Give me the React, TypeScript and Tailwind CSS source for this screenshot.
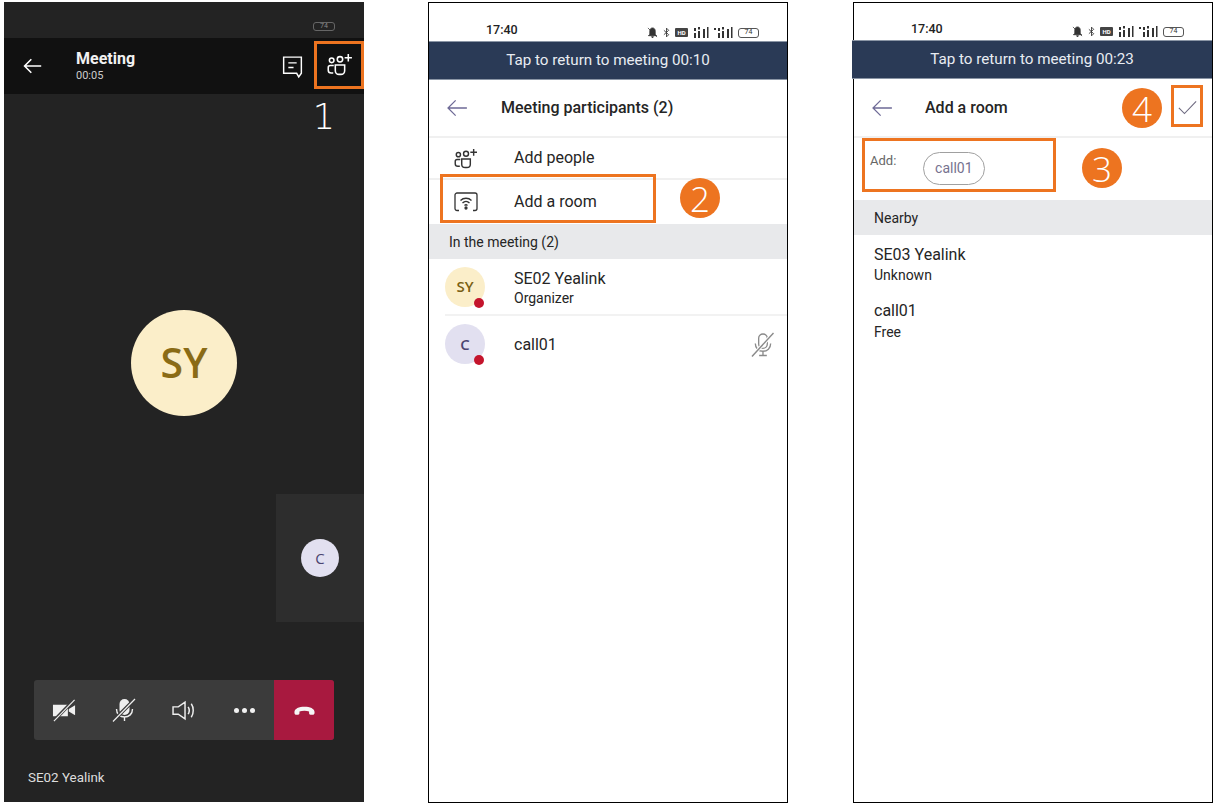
import React from "react";

const AddPeopleIcon = ({ className }: { className?: string }) => (
  <svg viewBox="0 0 26 22" fill="none" stroke="currentColor" strokeWidth="1.5" className={className}>
    <circle cx="4.500" cy="7" r="2.200" />
    <circle cx="12.500" cy="6" r="2.600" />
    <path d="M6.500 12H3.200C2 12 1.200 12.800 1.200 14v2.500c0 1.600 1.200 2.700 2.800 2.700H6" />
    <path d="M8 11.500h9v5.500c0 2-1.600 3.500-3.600 3.500h-1.800C9.600 20.500 8 19 8 17z" />
    <path d="M20.500 1v7M17 4.500h7" />
  </svg>
);

const BackArrow = ({ className, weight = 1.4 }: { className?: string; weight?: number }) => (
  <svg viewBox="0 0 24 20" fill="none" stroke="currentColor" strokeWidth={weight} className={className}>
    <path d="M23 10H2M10.500 1.500 2 10l8.500 8.500" />
  </svg>
);

const MicOff = ({ className }: { className?: string }) => (
  <svg viewBox="0 0 24 26" fill="none" stroke="currentColor" strokeWidth="1.4" className={className}>
    <rect x="8" y="2" width="9" height="15" rx="4.500" />
    <path d="M4.500 12c0 5 3.500 8 8 8s8-3 8-8M12.500 20v4M8.500 24.500h8" />
    <path d="M23.500 1 1 25.500" stroke="#ffffff" strokeWidth="3.500" />
    <path d="M23.500 1 1 25.500" strokeWidth="1.500" />
  </svg>
);

const StatusBar = ({ time, className }: { time: string; className: string }) => (
  <div className={`flex items-end pb-[3px] pl-[57px] pr-[28px] ${className}`}>
    <span className="text-[12.500px] leading-4 text-[#222]" style={{ fontWeight: 500 }}>{time}</span>
    <div className="ml-auto flex items-center gap-[5px] text-[#333]">
      <svg viewBox="0 0 12 12" className="h-[11px] w-[11px]" fill="currentColor">
        <path d="M6 1c2 0 3 1.500 3 3.500V8l1.500 1.500h-9L3 8V4.500C3 2.500 4 1 6 1zM5 10.500h2L6 12zM1 1l10 10" stroke="currentColor" strokeWidth="0.8" />
      </svg>
      <svg viewBox="0 0 8 12" className="h-[11px] w-[7px]" fill="none" stroke="currentColor">
        <path d="M1 3.500 6.500 8.500 4 11V1l2.500 2.500L1 8.500" />
      </svg>
      <span className="flex h-[9px] w-[13px] items-center justify-center rounded-[1px] bg-[#444] text-[6px] font-bold leading-none text-white">HD</span>
      <svg viewBox="0 0 16 11" className="h-[11px] w-[16px]" fill="currentColor">
        <path d="M1 6h2v5H1zM5 4h2v7H5zM10 2h2v9h-2zM14 0h1.500v11H14zM1 1h2v3H1zM5 0h2v2.500H5z" />
      </svg>
      <svg viewBox="0 0 19 11" className="h-[11px] w-[19px]" fill="currentColor">
        <path d="M0 1h2v2H0zM4 6h2v5H4zM8 4h2v7H8zM13 2h2v9h-2zM17 0h1.500v11H17zM4 1h2v3H4zM8 0h2v2.500H8z" />
      </svg>
      <span className="flex h-[10px] w-[21px] items-center justify-center rounded-[3px] border border-[#555] text-[7px] leading-none text-[#333]">74</span>
    </div>
  </div>
);

const ReturnBar = ({ text, className }: { text: string; className?: string }) => (
  <div className={`flex h-[39px] items-center justify-center border-y border-[#8a95a5] bg-[#2a3a56] text-[15.200px] text-[#e8ecf2] ${className ?? ""}`}>
    {text}
  </div>
);

const Callout = ({ n, className }: { n: string; className: string }) => (
  <div
    className={`absolute flex h-10 w-10 items-center justify-center rounded-full bg-[#ed7420] text-[35px] font-light leading-none text-white ${className}`}
    style={{ fontFamily: "'Open Sans', sans-serif" }}
  >
    {n}
  </div>
);

const Highlight = ({ className }: { className: string }) => (
  <div className={`absolute border-[3px] border-[#ed7420] ${className}`} />
);

function CallScreen() {
  return (
    <div className="relative flex h-[800px] w-[360px] flex-col bg-[#232323] text-white">
      <div className="flex h-[36px] items-center justify-end pr-[29px] pt-[12px]">
        <span className="flex h-[9px] w-[22px] items-center justify-center rounded-[3px] border border-[#666] text-[7px] leading-none text-[#888]">74</span>
      </div>
      <div className="flex h-[56px] items-center bg-[#111111] pl-[19px] pr-[10px]">
        <BackArrow className="h-[16px] w-[19px] text-white" weight={2} />
        <div className="ml-[34px]">
          <div className="text-[16px] font-bold leading-[20px] text-[#f2f2f2]">Meeting</div>
          <div className="text-[11px] leading-[14px] text-[#ccc]">00:05</div>
        </div>
        <svg viewBox="0 0 24 24" fill="none" stroke="currentColor" strokeWidth="1.4" className="ml-auto mr-[22px] h-[25px] w-[25px]">
          <path d="M3.500 3h17v15.500L18 22l-2-3.500H3.500zM8 8.500h8M8 13h5" />
        </svg>
        <AddPeopleIcon className="mb-[3px] h-[23px] w-[27px] text-white" />
      </div>
      <Highlight className="right-0 top-[39px] h-[48px] w-[50px]" />
      <div className="absolute right-[29px] top-[95px] text-[35px] font-light leading-10" style={{ fontFamily: "'DejaVu Sans', sans-serif" }}>1</div>

      <div className="relative flex flex-1 flex-col items-center">
        <div className="mt-[216px] flex h-[106px] w-[106px] items-center justify-center rounded-full bg-[#fbeec9] text-[41px] font-semibold text-[#8a6b16]" style={{ fontFamily: "'Open Sans', sans-serif" }}>
          SY
        </div>
        <div className="absolute right-0 top-[400px] flex h-[128px] w-[88px] items-center justify-center bg-[#2d2d2d]">
          <div className="flex h-[38px] w-[38px] items-center justify-center rounded-full bg-[#e2e0f0] text-[15px] text-[#4a4570]" style={{ fontFamily: "'Open Sans', sans-serif" }}>
            C
          </div>
        </div>
        <div className="mt-auto mb-[62px] flex h-[60px] w-[300px] overflow-hidden rounded-[3px] bg-[#3b3b3b]">
          <div className="flex w-[60px] items-center justify-center">
            <svg viewBox="0 0 26 24" className="h-[24px] w-[25px]" fill="#efefef" stroke="none">
              <path d="M1 6.500h15.500v12H1zM17.500 11 24 7v10.500l-6.500-4z" />
              <path d="M23 1.500 2 23" stroke="#3b3b3b" strokeWidth="3.500" />
              <path d="M23.500 1.500 2 23.500" stroke="#efefef" strokeWidth="1.200" />
            </svg>
          </div>
          <div className="flex w-[60px] items-center justify-center">
            <svg viewBox="0 0 24 26" className="h-[26px] w-[24px]">
              <rect x="7.500" y="2" width="10" height="16" rx="5" fill="#efefef" />
              <path d="M4.500 12c0 5 3.500 8 8 8s8-3 8-8M12.500 20v4" fill="none" stroke="#efefef" strokeWidth="1.400" />
              <path d="M23 2 1 24" stroke="#3b3b3b" strokeWidth="3.500" />
              <path d="M23 2 1 24.500" stroke="#efefef" strokeWidth="1.200" />
            </svg>
          </div>
          <div className="flex w-[60px] items-center justify-center pl-[1px]">
            <svg viewBox="0 0 24 20" fill="none" stroke="#efefef" strokeWidth="1.400" className="h-[21px] w-[25px]">
              <path d="M1 6.500h5L12.500 2v16L6 13.500H1zM15.500 6.500c1.200 2 1.200 5 0 7M18.500 3.500c2.500 3.500 2.500 9.500 0 13" />
            </svg>
          </div>
          <div className="flex w-[60px] items-center justify-center gap-[3px]">
            <span className="h-[5px] w-[5px] rounded-full bg-[#f2f2f2]" />
            <span className="h-[5px] w-[5px] rounded-full bg-[#f2f2f2]" />
            <span className="h-[5px] w-[5px] rounded-full bg-[#f2f2f2]" />
          </div>
          <div className="flex w-[60px] items-center justify-center bg-[#a8193f]">
            <svg viewBox="0 0 24 12" fill="#f5f5f5" className="h-[11px] w-[23px]">
              <path d="M1 8c0-4 5-6 11-6s11 2 11 6c0 1.500-.500 2.500-1.500 2.500h-3c-1 0-1.500-.800-1.500-1.800V7c-1.500-.500-3-.700-5-.700S8 6.500 6.500 7v1.700c0 1-.500 1.800-1.500 1.800H2.500C1.500 10.500 1 9.500 1 8z" />
            </svg>
          </div>
        </div>
        <div className="absolute bottom-[16px] left-[24px] text-[13.400px] leading-4 text-[#ddd]">SE02 Yealink</div>
      </div>
    </div>
  );
}

function ParticipantsScreen() {
  return (
    <div className="relative flex h-[801px] w-[360px] flex-col border border-black bg-white text-[#252525]">
      <StatusBar time="17:40" className="h-[38px]" />
      <ReturnBar text="Tap to return to meeting 00:10" />
      <div className="flex h-[58px] items-center border-b-2 border-[#f0f0f0] pl-[16px]">
        <BackArrow className="h-[18px] w-[24px] text-[#6e6a96]" />
        <span className="ml-[32px] text-[16px] font-medium">Meeting participants (2)</span>
      </div>
      <div className="flex h-[42px] items-center border-b-2 border-[#f0f0f0] pl-[25px]">
        <AddPeopleIcon className="h-[21px] w-[25px] text-[#333]" />
        <span className="ml-[35px] text-[16px]">Add people</span>
      </div>
      <div className="flex h-[44px] items-center pl-[25px]">
        <svg viewBox="0 0 24 20" fill="none" stroke="#333" strokeWidth="1.300" className="h-[20px] w-[24px]">
          <path d="M5 18.500H3c-1 0-2-.800-2-2V3c0-1 1-2 2-2h18c1 0 2 1 2 2v13.500c0 1.200-1 2-2 2h-2" />
          <path d="M6.500 8.500c3-3 8-3 11 0M8.500 11c2-2 5-2 7 0M10.500 13.500c1-1 2-1 3 0" />
          <circle cx="12" cy="16" r="1" fill="#333" />
        </svg>
        <span className="ml-[36px] text-[16px]">Add a room</span>
      </div>
      <div className="flex h-[35px] items-center bg-[#e8e9eb] pl-[20px] pt-[1px] text-[14px]">In the meeting (2)</div>
      <div className="ml-[16px] flex h-[57px] items-center border-b-2 border-[#f2f2f2]">
        <div className="relative flex h-[40px] w-[40px] items-center justify-center rounded-full bg-[#fbeec9] text-[15px] font-semibold text-[#7a5f12]" style={{ fontFamily: "'Open Sans', sans-serif" }}>
          SY
          <span className="absolute bottom-[-1px] right-[1px] h-[10px] w-[10px] rounded-full bg-[#c4142c]" />
        </div>
        <div className="ml-[29px] pt-[3px]">
          <div className="text-[16px] leading-[20px]">SE02 Yealink</div>
          <div className="text-[14px] leading-[19px]">Organizer</div>
        </div>
      </div>
      <div className="flex h-[56px] items-center pl-[16px] pr-[13px]">
        <div className="relative flex h-[40px] w-[40px] items-center justify-center rounded-full bg-[#e2e0f0] text-[15px] font-semibold text-[#4a4570]" style={{ fontFamily: "'Open Sans', sans-serif" }}>
          C
          <span className="absolute bottom-[-1px] right-[1px] h-[10px] w-[10px] rounded-full bg-[#c4142c]" />
        </div>
        <span className="ml-[29px] pt-[2px] text-[16px]">call01</span>
        <MicOff className="ml-auto h-[25px] w-[23px] text-[#8a8a8a]" />
      </div>
      <Highlight className="left-[11px] top-[171px] h-[49px] w-[216px]" />
      <Callout n="2" className="left-[251px] top-[175px]" />
    </div>
  );
}

function AddRoomScreen() {
  return (
    <div className="relative flex h-[801px] w-[360px] flex-col border border-black bg-white text-[#252525]">
      <StatusBar time="17:40" className="h-[37px]" />
      <ReturnBar text="Tap to return to meeting 00:23" className="-ml-[2px]" />
      <div className="flex h-[59px] items-center border-b-2 border-[#f0f0f0] pl-[16px]">
        <BackArrow className="h-[18px] w-[24px] text-[#6e6a96]" />
        <span className="ml-[31px] text-[16px] font-medium">Add a room</span>
      </div>
      <div className="flex h-[62px] items-start pl-[16px] pt-[13px]">
        <span className="text-[13px] text-[#666]">Add:</span>
        <span className="ml-[27px] mt-[1px] flex h-[33px] w-[62px] items-center justify-center rounded-full border-[1.500px] border-[#a0a0a0] pr-[1px] text-[14px] text-[#76728f]">
          call01
        </span>
      </div>
      <div className="flex h-[35px] items-center bg-[#e8e9eb] pl-[20px] pt-[1px] text-[14px]">Nearby</div>
      <div className="pl-[20px] pt-[9px]">
        <div className="h-[56px]">
          <div className="text-[16px] leading-[22px]">SE03 Yealink</div>
          <div className="text-[14px] leading-[18px]">Unknown</div>
        </div>
        <div className="h-[56px]">
          <div className="text-[16px] leading-[22px]">call01</div>
          <div className="text-[14px] leading-[20px]">Free</div>
        </div>
      </div>
      <Highlight className="left-[8px] top-[135px] h-[54px] w-[194px]" />
      <Callout n="3" className="left-[228px] top-[145px]" />
      <Callout n="4" className="left-[268px] top-[85px]" />
      <Highlight className="left-[317px] top-[82px] h-[42px] w-[32px]" />
      <svg viewBox="0 0 22 16" fill="none" stroke="#6e6a80" strokeWidth="1.300" className="absolute left-[324px] top-[97px] h-[15px] w-[19px]">
        <path d="M1 8.500 7.500 15 21 1" />
      </svg>
    </div>
  );
}

export default function App() {
  return (
    <div
      className="flex h-[808px] w-[1216px] items-start gap-[64px] overflow-hidden bg-white pl-[4px] pt-[2px]"
      style={{ fontFamily: "Roboto, sans-serif" }}
    >
      <CallScreen />
      <ParticipantsScreen />
      <div className="ml-[1px]">
        <AddRoomScreen />
      </div>
    </div>
  );
}
